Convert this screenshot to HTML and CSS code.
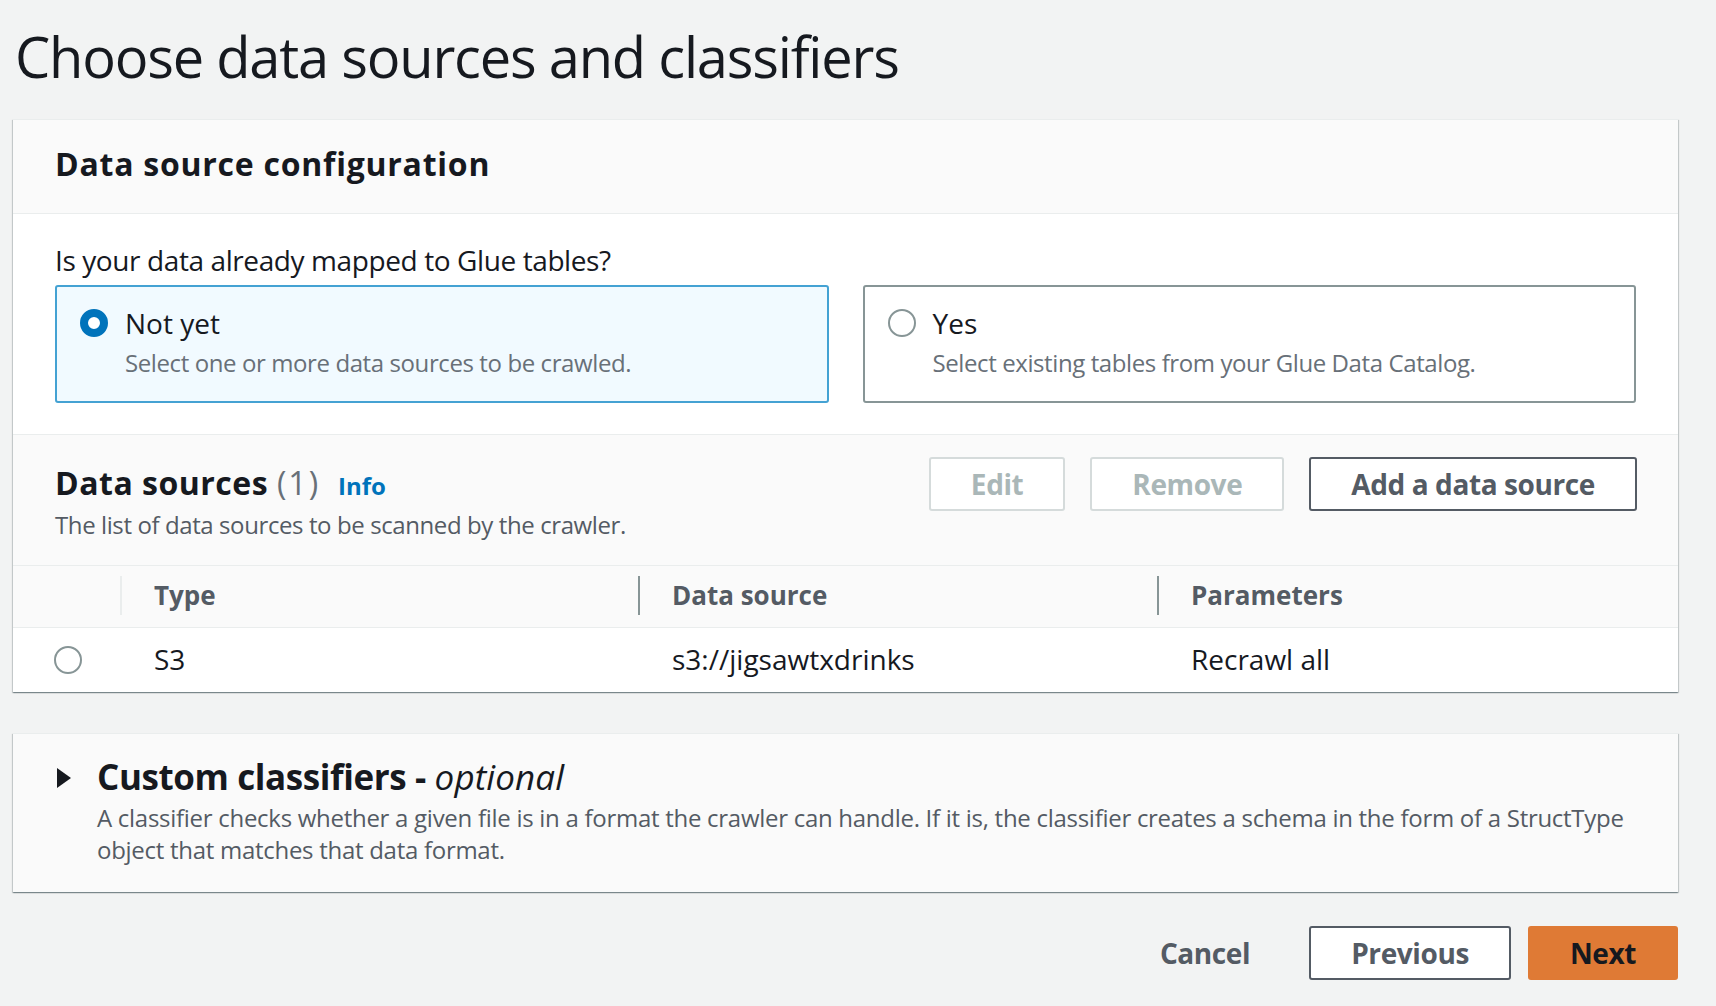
FILE: index.html
```html
<!DOCTYPE html>
<html lang="en">
<head>
<meta charset="utf-8">
<title>Choose data sources and classifiers</title>
<link rel="stylesheet" href="styles.css">
</head>
<body>
<main class="page">
  <h1 class="page-title">Choose data sources and classifiers</h1>

  <section class="panel">
    <header class="panel-header">
      <h2 class="panel-title">Data source configuration</h2>
    </header>
    <div class="panel-body">
      <div class="field-label">Is your data already mapped to Glue tables?</div>
      <div class="tiles">
        <div class="tile tile-selected">
          <span class="radio radio-checked"></span>
          <div class="tile-text">
            <div class="tile-label">Not yet</div>
            <div class="tile-desc">Select one or more data sources to be crawled.</div>
          </div>
        </div>
        <div class="tile">
          <span class="radio"></span>
          <div class="tile-text">
            <div class="tile-label">Yes</div>
            <div class="tile-desc">Select existing tables from your Glue Data Catalog.</div>
          </div>
        </div>
      </div>
    </div>

    <div class="sources">
      <div class="sources-header">
        <div class="sources-heading">
          <h2 class="sources-title">Data sources <span class="count">(1)</span><a class="info" href="#">Info</a></h2>
          <div class="sources-desc">The list of data sources to be scanned by the crawler.</div>
        </div>
        <div class="sources-actions">
          <button class="btn btn-disabled" type="button">Edit</button>
          <button class="btn btn-disabled" type="button">Remove</button>
          <button class="btn btn-normal" type="button">Add a data source</button>
        </div>
      </div>
      <table class="table">
        <colgroup>
          <col class="c-sel"><col class="c-type"><col class="c-src"><col>
        </colgroup>
        <thead>
          <tr>
            <th></th>
            <th><div class="th-inner th-light">Type</div></th>
            <th><div class="th-inner">Data source</div></th>
            <th><div class="th-inner">Parameters</div></th>
          </tr>
        </thead>
        <tbody>
          <tr>
            <td class="td-sel"><span class="radio"></span></td>
            <td>S3</td>
            <td>s3://jigsawtxdrinks</td>
            <td>Recrawl all</td>
          </tr>
        </tbody>
      </table>
    </div>
  </section>

  <section class="panel panel-expand">
    <div class="expand-row">
      <svg class="caret" width="16" height="20" viewBox="0 0 16 20" aria-hidden="true"><path d="M1 0 L15 10 L1 20 Z" fill="#16191f"/></svg>
      <div class="expand-text">
        <h2 class="expand-title">Custom classifiers - <em>optional</em></h2>
        <p class="expand-desc">A classifier checks whether a given file is in a format the crawler can handle. If it is, the classifier creates a schema in the form of a StructType object that matches that data format.</p>
      </div>
    </div>
  </section>

  <div class="footer-actions">
    <button class="btn btn-link" type="button">Cancel</button>
    <button class="btn btn-normal" type="button">Previous</button>
    <button class="btn btn-primary" type="button">Next</button>
  </div>
</main>
</body>
</html>
```

FILE: styles.css
```css
* { box-sizing: border-box; }

html, body {
  margin: 0;
  padding: 0;
  background: #f2f3f3;
}

body {
  font-family: "Open Sans", "Noto Sans", Arial, sans-serif;
  color: #16191f;
}

.page {
  padding: 24px 38px 0 13px;
}

.page-title {
  margin: 0 0 31px 2px;
  font-size: 56px;
  line-height: 64px;
  font-weight: 400;
  letter-spacing: -1.2px;
  color: #16191f;
}

.panel {
  background: #fff;
  border-top: 1px solid #eaeded;
  box-shadow: 0 1px 1px 0 rgba(0, 28, 36, 0.3), 1px 1px 1px 0 rgba(0, 28, 36, 0.15), -1px 1px 1px 0 rgba(0, 28, 36, 0.15);
}

.panel-header {
  background: #fafafa;
  padding: 24px 42px 29px;
  border-bottom: 1px solid #eaeded;
}

.panel-title {
  margin: 0;
  font-size: 32px;
  line-height: 40px;
  font-weight: 700;
  letter-spacing: 0.75px;
}

.panel-body {
  padding: 26px 42px 31px;
}

.field-label {
  font-size: 28px;
  line-height: 40px;
  letter-spacing: -0.4px;
  margin-bottom: 5px;
}

.tiles {
  display: grid;
  grid-template-columns: 1fr 1fr;
  column-gap: 34px;
}

.tile {
  display: flex;
  align-items: flex-start;
  gap: 17px;
  border: 2px solid #879596;
  border-radius: 3px;
  padding: 16px 23px 21px;
  background: #fff;
}

.tile-selected {
  border-color: #44a2d3;
  background: #f1faff;
}

.radio {
  flex: none;
  display: inline-block;
  width: 28px;
  height: 28px;
  border-radius: 50%;
  border: 2px solid #879596;
  background: #fff;
  margin-top: 6px;
}

.radio-checked {
  border: 8px solid #0073bb;
  background: #fff;
}

.tile-label {
  font-size: 28px;
  line-height: 40px;
}

.tile-desc {
  margin-top: 3px;
  font-size: 24px;
  line-height: 34px;
  letter-spacing: -0.4px;
  color: #687078;
}

.sources {
  background: #fafafa;
  border-top: 1px solid #eaeded;
}

.sources-header {
  display: flex;
  justify-content: space-between;
  align-items: flex-start;
  padding: 22px 41px 24px 42px;
}

.sources-heading {
  padding-top: 8px;
}

.sources-title {
  margin: 0;
  font-size: 32px;
  line-height: 36px;
  font-weight: 700;
  letter-spacing: 0.5px;
}

.count {
  font-weight: 400;
  color: #687078;
  letter-spacing: 2px;
}

.info {
  margin-left: 18px;
  font-size: 24px;
  font-weight: 700;
  letter-spacing: 0;
  color: #0073bb;
  text-decoration: none;
}

.sources-desc {
  margin-top: 5px;
  font-size: 24px;
  line-height: 32px;
  letter-spacing: -0.4px;
  color: #545b64;
}

.sources-actions {
  display: flex;
  gap: 25px;
}

.btn {
  font-family: inherit;
  font-size: 28px;
  line-height: 50px;
  font-weight: 700;
  letter-spacing: -0.4px;
  padding: 0 40px;
  border: 2px solid transparent;
  border-radius: 3px;
  background: #fff;
  cursor: pointer;
}

.btn-disabled {
  border-color: #d5dbdb;
  color: #aab7b8;
}

.btn-normal {
  border-color: #545b64;
  color: #545b64;
}

.btn-link {
  background: transparent;
  color: #545b64;
}

.btn-primary {
  background: #df7a35;
  border-color: #df7a35;
  color: #16191f;
}

.table {
  width: 100%;
  border-collapse: collapse;
  table-layout: fixed;
}

.c-sel { width: 107px; }
.c-type { width: 518px; }
.c-src { width: 519px; }

.table thead tr {
  background: #fafafa;
  border-top: 1px solid #eaeded;
  border-bottom: 1px solid #eaeded;
}

.table th {
  padding: 10px 0 12px;
  text-align: left;
  font-weight: 700;
  font-size: 26px;
  color: #545b64;
}

.th-inner {
  border-left: 2px solid #879596;
  padding-left: 32px;
  line-height: 39px;
}

.th-inner.th-light {
  border-left-color: #eaeded;
}

.table tbody tr {
  background: #fff;
}

.table td {
  padding: 11px 0 13px 34px;
  font-size: 28px;
  line-height: 40px;
  color: #16191f;
  vertical-align: top;
}

.table td.td-sel {
  padding-left: 41px;
}

.td-sel .radio {
  width: 28px;
  height: 28px;
  margin-top: 7px;
  vertical-align: top;
}

.panel-expand {
  margin-top: 41px;
  background: #fafafa;
  padding: 21px 42px 26px 43px;
}

.expand-row {
  display: flex;
  align-items: flex-start;
  gap: 25px;
}

.caret {
  flex: none;
  margin-top: 13px;
}

.expand-title {
  margin: 0;
  font-size: 35px;
  line-height: 44px;
  font-weight: 700;
  letter-spacing: -0.4px;
}

.expand-title em {
  font-weight: 400;
  letter-spacing: 0.1px;
}

.expand-desc {
  margin: 3px 0 0;
  font-size: 24px;
  line-height: 32px;
  letter-spacing: -0.28px;
  color: #545b64;
}

.footer-actions {
  display: flex;
  justify-content: flex-end;
  gap: 17px;
  margin-top: 34px;
}
```
